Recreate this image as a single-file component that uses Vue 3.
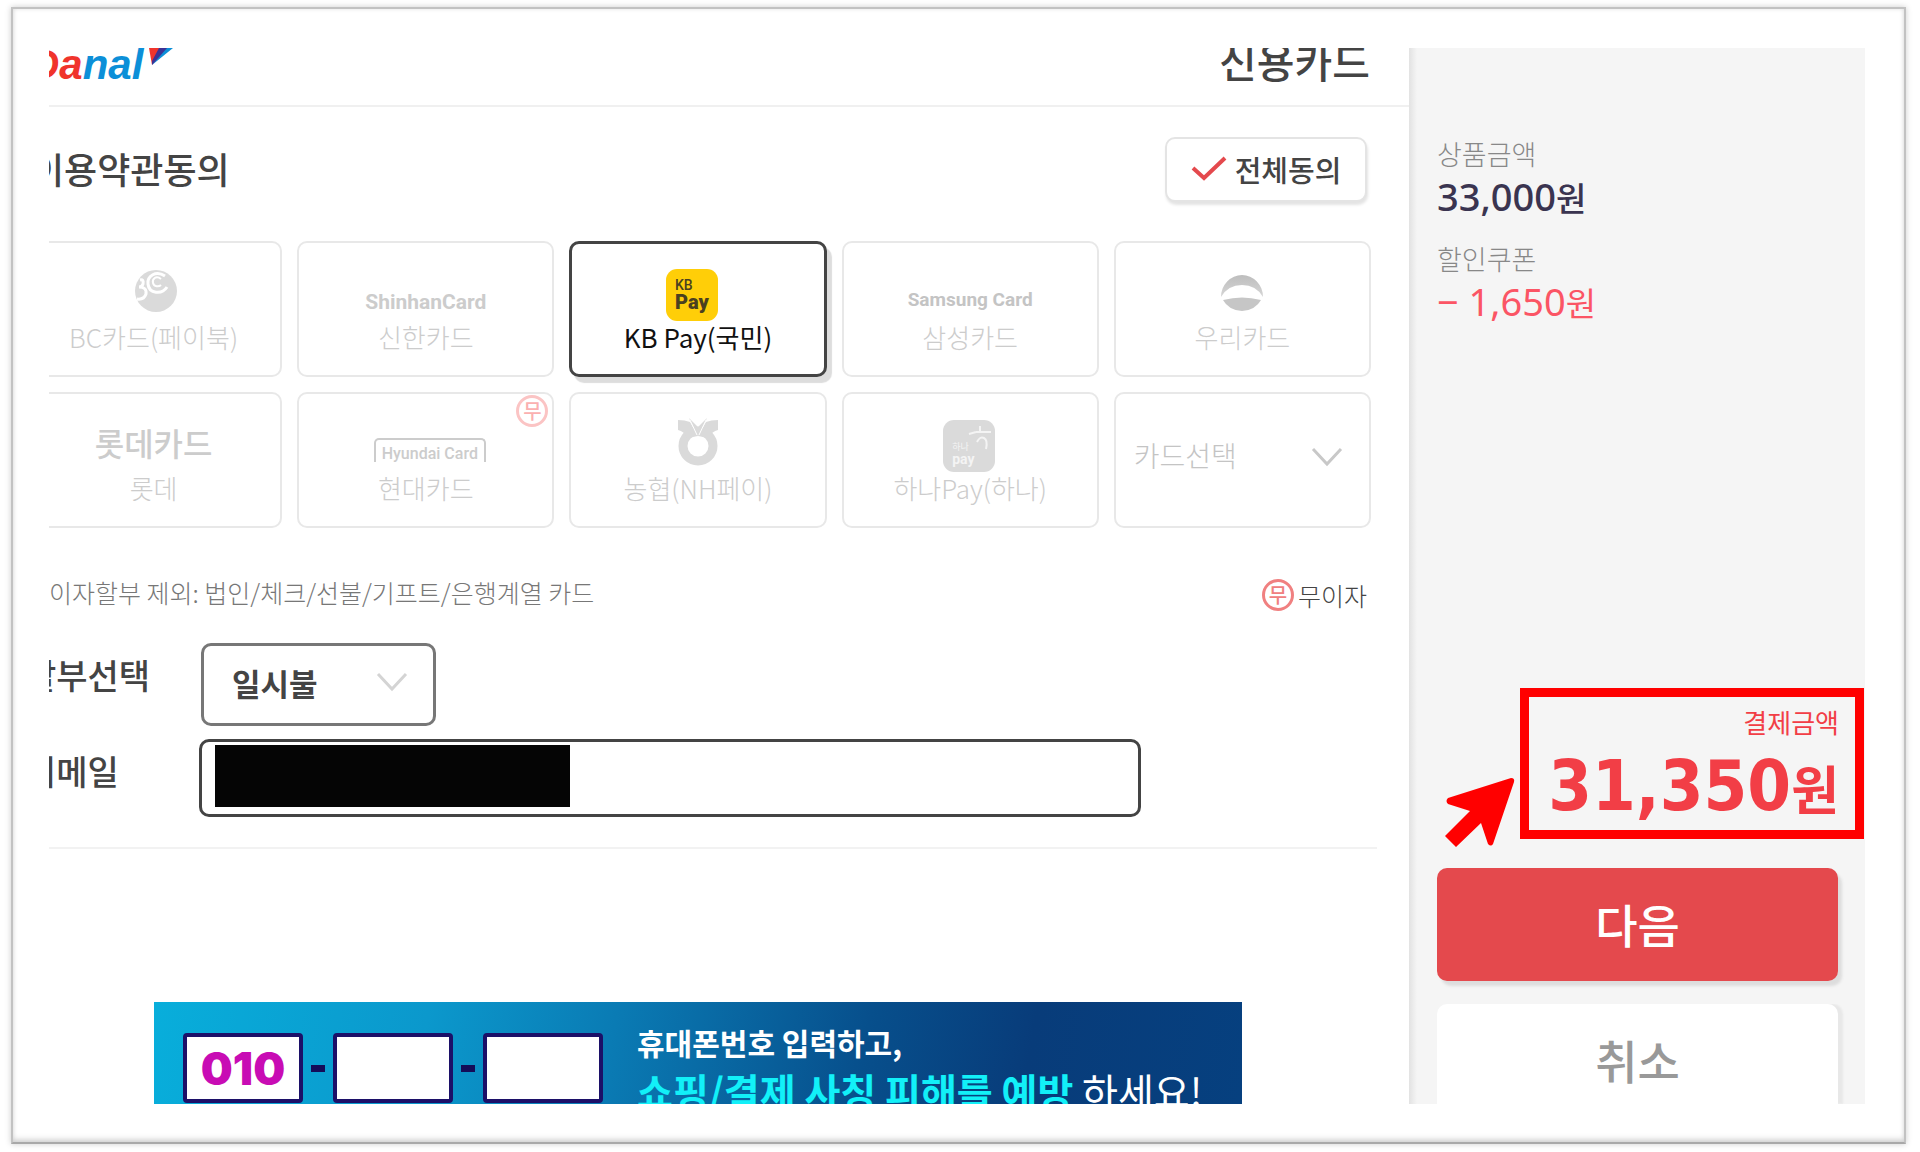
<script setup>
import { ref } from 'vue'

const cards = [
  { id: 'bc', label: 'BC카드(페이북)' },
  { id: 'shinhan', label: '신한카드' },
  { id: 'kb', label: 'KB Pay(국민)' },
  { id: 'samsung', label: '삼성카드' },
  { id: 'woori', label: '우리카드' },
  { id: 'lotte', label: '롯데' },
  { id: 'hyundai', label: '현대카드', free: true },
  { id: 'nh', label: '농협(NH페이)' },
  { id: 'hana', label: '하나Pay(하나)' }
]
const selected = ref('kb')
const email = ref('')
</script>

<template>
  <div class="page">
    <div class="frame">
      <main class="main">
        <header class="header">
          <a href="#" class="logo" aria-label="Danal">
            <span class="logo-text"><span class="logo-red">Da</span>nal</span>
            <svg class="logo-flag" width="24" height="17" viewBox="0 0 24 17">
              <path d="M0 0H12L3 17Z" fill="#f0342c" />
              <path d="M16 0H24L3 17Z" fill="#0c8fd8" />
              <path d="M10 0H18L4 16L3 17L3 13Z" fill="#3d3194" />
            </svg>
          </a>
          <h1 class="page-title">신용카드</h1>
        </header>

        <div class="body">
          <div class="agree">
            <h2 class="agree-title">이용약관동의</h2>
            <button type="button" class="agree-all">
              <svg width="36" height="26" viewBox="0 0 36 26" fill="none" stroke="#e4494d" stroke-width="4">
                <path d="M2 12L13 22L34 2" />
              </svg>
              전체동의
            </button>
          </div>

          <div class="cards">
            <button
              v-for="card in cards"
              :key="card.id"
              type="button"
              class="card"
              :class="{ active: card.id === selected }"
              @click="selected = card.id"
            >
              <span class="mark" :class="card.id">
                <svg v-if="card.id === 'bc'" width="44" height="44" viewBox="0 0 44 44">
                  <circle cx="22" cy="22" r="21" fill="#dadada" />
                  <path d="M31 7C22 1 13 7 14 15C15 25 28 26 33 18" fill="none" stroke="#fff" stroke-width="3" />
                  <path d="M27 10C22 6 18 10 19 14C20 18 25 18 27 16" fill="none" stroke="#fff" stroke-width="2" />
                  <path d="M6 11Q10 10 9 15Q8 18 5 18Q13 18 12 25Q10 31 3 30" fill="none" stroke="#fff" stroke-width="3" />
                </svg>
                <template v-else-if="card.id === 'shinhan'">ShinhanCard</template>
                <template v-else-if="card.id === 'kb'"><span class="kb-top">KB</span><span class="kb-pay">Pay</span></template>
                <template v-else-if="card.id === 'samsung'">Samsung Card</template>
                <svg v-else-if="card.id === 'woori'" width="44" height="46" viewBox="0 0 44 46">
                  <defs>
                    <linearGradient id="woori" x1="0" y1="0" x2="0" y2="1">
                      <stop offset="0" stop-color="#bdbdbd" />
                      <stop offset="1" stop-color="#d6d6d6" />
                    </linearGradient>
                  </defs>
                  <path d="M1 28A21 22 0 1 1 43 28Q36 16 22 16Q8 16 1 28Z" fill="url(#woori)" />
                  <path d="M3 31Q22 26 41 31A21 19 0 0 1 3 31Z" fill="#c6c6c6" />
                </svg>
                <template v-else-if="card.id === 'lotte'">롯데카드</template>
                <template v-else-if="card.id === 'hyundai'">Hyundai Card</template>
                <svg v-else-if="card.id === 'nh'" width="42" height="48" viewBox="0 0 42 48">
                  <circle cx="21" cy="28" r="15" fill="none" stroke="#dadada" stroke-width="9" />
                  <path d="M1 2Q8 2 13 4L21 18L10 20Q7 13 1 12Z" fill="#dadada" />
                  <path d="M41 2Q34 2 29 4L21 18L32 20Q35 13 41 12Z" fill="#dadada" />
                  <path d="M12 0L21 9L30 0L22 17H20Z" fill="#dadada" />
                  <path d="M13 2L20 17M29 2L22 17" stroke="#fff" stroke-width="1" />
                </svg>
                <template v-else>
                  <svg class="hana-figure" width="24" height="26" viewBox="0 0 24 26" fill="none" stroke="#f4f4f4" stroke-width="2">
                    <path d="M12 1V6M1 9L8 7M8 7H23M9 17Q12 11 16 13T18 24" />
                  </svg>
                  <span class="hana-top">하나</span>
                  <span class="hana-pay">pay</span>
                </template>
              </span>
              <span class="card-label">{{ card.label }}</span>
              <span v-if="card.free" class="free-mark pale">무</span>
            </button>

            <div class="card-more">
              <select aria-label="카드선택">
                <option>카드선택</option>
              </select>
              <svg width="32" height="20" viewBox="0 0 32 20" fill="none" stroke="#c8c8c8" stroke-width="3">
                <path d="M2 2L16 17L30 2" />
              </svg>
            </div>
          </div>

          <div class="notice">
            <p>이자할부 제외: 법인/체크/선불/기프트/은행계열 카드</p>
            <span class="legend"><span class="free-mark">무</span>무이자</span>
          </div>

          <div class="row">
            <label for="plan">할부선택</label>
            <div class="plan">
              <select id="plan">
                <option>일시불</option>
              </select>
              <svg width="32" height="20" viewBox="0 0 32 20" fill="none" stroke="#d4d4d4" stroke-width="3">
                <path d="M2 2L16 17L30 2" />
              </svg>
            </div>
          </div>
          <div class="row email-row">
            <label for="email">이메일</label>
            <div class="email">
              <input id="email" v-model="email" type="email" />
              <span class="redacted"></span>
            </div>
          </div>
        </div>

        <hr class="rule" />

        <section class="banner">
          <div class="phone">
            <span class="phone-box">010</span>
            <span class="dash"></span>
            <span class="phone-box"></span>
            <span class="dash"></span>
            <span class="phone-box"></span>
          </div>
          <div class="banner-text">
            <p class="banner-small">휴대폰번호 입력하고,</p>
            <p class="banner-large"><strong>쇼핑/결제 사칭 피해를 예방</strong> 하세요!</p>
          </div>
        </section>
      </main>

      <aside class="side">
        <dl class="prices">
          <dt>상품금액</dt>
          <dd>33,000<span class="won">원</span></dd>
          <dt>할인쿠폰</dt>
          <dd class="discount">− 1,650<span class="won">원</span></dd>
        </dl>
        <div class="total">
          <span class="total-label">결제금액</span>
          <span class="total-value">31,350<span class="total-won">원</span></span>
          <svg class="pointer" width="70" height="72" viewBox="0 0 70 72">
            <path d="M66 1Q70 1 69 5L48 67Q46 70 43 67L36 46L11 70L0 59L25 34L3 27Q0 24 3 21Z" fill="#f00" />
          </svg>
        </div>
        <button type="button" class="next">다음</button>
        <button type="button" class="cancel">취소</button>
      </aside>
    </div>
  </div>
</template>

<style>
body {
  margin: 0;
  background: #fff;
}
</style>

<style scoped>
* {
  box-sizing: border-box;
}
.page {
  padding: 7px 14px 8px 11px;
  font-family: "Noto Sans CJK KR", sans-serif;
  color: #444;
}
h1, h2, p, dl, dd {
  margin: 0;
}
button, select, input {
  font-family: inherit;
  margin: 0;
}
.frame {
  display: flex;
  padding: 39px 39px 38px 36px;
  border: 2px solid #c2c2c2;
  border-bottom-color: #a8a8a8;
  box-shadow: 0 0 6px #ccc, inset 0 -4px 6px -2px #ccc, inset 0 0 4px #e4e4e4;
}
.main {
  flex: 1;
  min-width: 0;
  overflow: hidden;
}
.header {
  display: flex;
  justify-content: space-between;
  height: 59px;
  padding-right: 39px;
  border-bottom: 2px solid #f0f0f0;
  overflow: hidden;
}
.logo {
  display: flex;
  margin-left: -20px;
  color: #0c8fd8;
  text-decoration: none;
}
.logo-text {
  font: italic bold 42px/42px "Liberation Sans", sans-serif;
  margin-top: -4px;
}
.logo-red {
  color: #f0342c;
}
.logo-flag {
  margin-left: 6px;
}
.page-title {
  margin-top: -18px;
  font-size: 41px;
  line-height: 60px;
  font-weight: 500;
}
.body {
  margin: 30px 38px 0 -24px;
}
.agree {
  display: flex;
  justify-content: space-between;
  align-items: center;
  padding: 0 4px 0 6px;
}
.agree-title {
  padding-bottom: 4px;
  font-size: 36px;
  line-height: 48px;
  font-weight: 500;
}
.agree-all {
  display: flex;
  align-items: center;
  justify-content: center;
  gap: 8px;
  width: 202px;
  height: 65px;
  padding: 0 0 2px;
  border: 2px solid #e4e4e4;
  border-radius: 10px;
  background: #fff;
  box-shadow: 1px 3px 3px #e4e4e4;
  color: #444;
  font-size: 29px;
  font-weight: 500;
}
.cards {
  display: grid;
  grid-template-columns: repeat(5, 1fr);
  gap: 15px;
  margin-top: 39px;
}
.card {
  position: relative;
  display: flex;
  flex-direction: column;
  align-items: center;
  height: 136px;
  padding: 26px 0 0;
  border: 2px solid #e8e8e8;
  border-radius: 10px;
  background: #fff;
  color: #ccc;
}
.card.active {
  border: 3px solid #444;
  padding-top: 25px;
  box-shadow: 5px 6px 1px #ddd;
  color: #111;
}
.card-label {
  margin-top: auto;
  padding-bottom: 22px;
  font-size: 26px;
  line-height: 32px;
  font-weight: 300;
  white-space: nowrap;
}
.active .card-label {
  padding-bottom: 21px;
  font-weight: 400;
}
.mark {
  display: block;
  height: 50px;
  color: #ccc;
  white-space: nowrap;
}
.bc {
  padding-left: 4px;
}
.shinhan {
  padding-top: 19px;
  font: bold 21px/28px Roboto, sans-serif;
}
.samsung {
  padding-top: 17px;
  color: #c4c4c4;
  font: bold 19px/28px Roboto, sans-serif;
}
.lotte {
  padding-top: 4px;
  font-size: 32px;
  line-height: 36px;
  font-weight: 500;
}
.hyundai {
  margin: 18px 0 0 8px;
  width: 112px;
  height: 24px;
  border: 2px solid #ccc;
  border-bottom: 0;
  border-radius: 5px 5px 0 0;
  font: 500 16px/28px Roboto, sans-serif;
  text-align: center;
}
.nh {
  margin-top: -2px;
}
.kb, .hana {
  position: relative;
  display: flex;
  flex-direction: column;
  width: 52px;
  height: 52px;
  padding: 9px 0 0 9px;
  border-radius: 11px;
  background: #ffce08;
  color: #4a4020;
  text-align: left;
}
.kb {
  margin-right: 12px;
}
.kb-top {
  font: 500 14px/14px Roboto, sans-serif;
}
.kb-pay {
  font: 900 20px/20px Roboto, sans-serif;
}
.hana {
  margin-right: 2px;
  padding-top: 22px;
  background: #dadada;
  color: #f4f4f4;
}
.hana-top {
  font-size: 9px;
  line-height: 10px;
}
.hana-pay {
  font: bold 14px/14px Roboto, sans-serif;
}
.hana-figure {
  position: absolute;
  top: 5px;
  right: 3px;
}
.free-mark {
  display: flex;
  align-items: center;
  justify-content: center;
  width: 32px;
  height: 32px;
  border: 3px solid #f08080;
  border-radius: 50%;
  color: #f08080;
  font-size: 20px;
  line-height: 24px;
  font-weight: 500;
}
.pale {
  position: absolute;
  top: 1px;
  right: 4px;
  border-color: #fbc4c4;
  color: #fbb0b0;
}
.card-more {
  display: grid;
  align-items: center;
  height: 136px;
}
.card-more select, .plan select {
  grid-area: 1 / 1;
  width: 100%;
  height: 100%;
  appearance: none;
  background: #fff;
}
.card-more select {
  padding: 0 18px 11px;
  border: 2px solid #e8e8e8;
  border-radius: 10px;
  color: #c4c4c4;
  font-size: 28px;
  font-weight: 300;
}
.card-more svg, .plan svg {
  grid-area: 1 / 1;
  justify-self: end;
  margin: 0 28px 6px 0;
  pointer-events: none;
}
.notice {
  display: flex;
  justify-content: space-between;
  margin-top: 48px;
  padding: 0 4px 0 24px;
  font-size: 25px;
  line-height: 36px;
  font-weight: 300;
  color: #777;
}
.notice p {
  line-height: 32px;
}
.legend {
  display: flex;
  align-items: center;
  gap: 4px;
  padding-top: 2px;
  height: 36px;
  color: #444;
}
.row {
  display: flex;
  margin-top: 31px;
}
.row label {
  width: 176px;
  font-size: 34px;
  line-height: 64px;
  font-weight: 500;
}
.plan {
  display: grid;
  align-items: center;
  width: 235px;
  height: 83px;
}
.plan select {
  padding: 0 28px 4px;
  border: 3px solid #777;
  border-radius: 10px;
  color: #444;
  font-size: 31px;
  font-weight: 700;
}
.email-row {
  margin-top: 13px;
}
.email-row label {
  width: 174px;
}
.email {
  position: relative;
  width: 942px;
}
.email input {
  width: 100%;
  height: 78px;
  padding: 0 16px;
  border: 3px solid #444;
  border-radius: 10px;
  background: #fff;
  font-size: 31px;
}
.redacted {
  position: absolute;
  top: 6px;
  left: 16px;
  width: 355px;
  height: 62px;
  background: #050505;
}
.email, .email input {
  display: block;
}
.rule {
  height: 2px;
  margin: 30px 32px 0 0;
  border: 0;
  background: #f2f2f2;
}
.banner {
  display: flex;
  gap: 34px;
  width: 1088px;
  height: 102px;
  margin: 153px 0 0 105px;
  padding-left: 29px;
  overflow: hidden;
  background: linear-gradient(100deg, #08aedb 0%, #0b98cc 25%, #0a7bb4 42%, #074f8c 65%, #083c7a 80%, #06407f 100%);
}
.phone {
  display: flex;
  align-items: center;
  gap: 8px;
  padding-top: 31px;
  height: 101px;
}
.phone-box {
  width: 120px;
  height: 70px;
  border: 4px solid #1c1068;
  border-radius: 4px;
  background: #fff;
  color: #c80cb4;
  font: 900 45px/64px Inter, "Open Sans", sans-serif;
  text-align: center;
}
.dash {
  width: 14px;
  height: 7px;
  background: #140c58;
}
.banner-text {
  padding-top: 18px;
  color: #fff;
  white-space: nowrap;
}
.banner-small {
  font-size: 30px;
  line-height: 44px;
  font-weight: 700;
}
.banner-large {
  font-size: 39px;
  line-height: 52px;
  font-weight: 400;
}
.banner-large strong {
  color: #12f0f8;
  font-weight: 700;
}
.side {
  display: flex;
  flex-direction: column;
  width: 456px;
  padding: 88px 27px 0 28px;
  background: linear-gradient(90deg, #e2e2e2 0, #f5f5f5 8px);
}
.prices dt {
  font-size: 27px;
  line-height: 36px;
  font-weight: 300;
  color: #888;
}
.prices dd {
  margin-bottom: 20px;
  font: 500 38px/48px "Noto Sans", sans-serif;
  color: #3a3450;
}
.prices .discount {
  color: #fb5565;
  font-weight: 400;
}
.won {
  font-family: "Noto Sans CJK KR", sans-serif;
  font-size: 33px;
}
.total {
  position: relative;
  display: flex;
  flex-direction: column;
  align-items: flex-end;
  width: 344px;
  height: 151px;
  margin: auto -26px 29px auto;
  padding: 7px 16px;
  border: 9px solid #f00;
  color: #f23e46;
}
.total-label {
  font-size: 26px;
  line-height: 36px;
  font-weight: 400;
}
.total-value {
  padding-top: 4px;
  font: bold 70px/84px "DejaVu Sans Condensed", "DejaVu Sans", sans-serif;
  white-space: nowrap;
}
.total-won {
  font: 700 52px/52px "Noto Sans CJK KR", sans-serif;
}
.pointer {
  position: absolute;
  top: 80px;
  left: -84px;
}
.next, .cancel {
  border: 0;
  font-size: 46px;
  font-weight: 500;
}
.next {
  height: 113px;
  margin-bottom: 23px;
  padding: 0 0 4px;
  border-radius: 10px;
  background: #e4494d;
  box-shadow: 4px 5px 3px #ddd;
  color: #fff;
}
.cancel {
  height: 100px;
  padding: 10px 0 0;
  border-radius: 10px 10px 0 0;
  background: #fff;
  box-shadow: 5px 0 2px #e8e8e8;
  clip-path: inset(0 -8px 0 0);
  color: #999;
}
</style>
